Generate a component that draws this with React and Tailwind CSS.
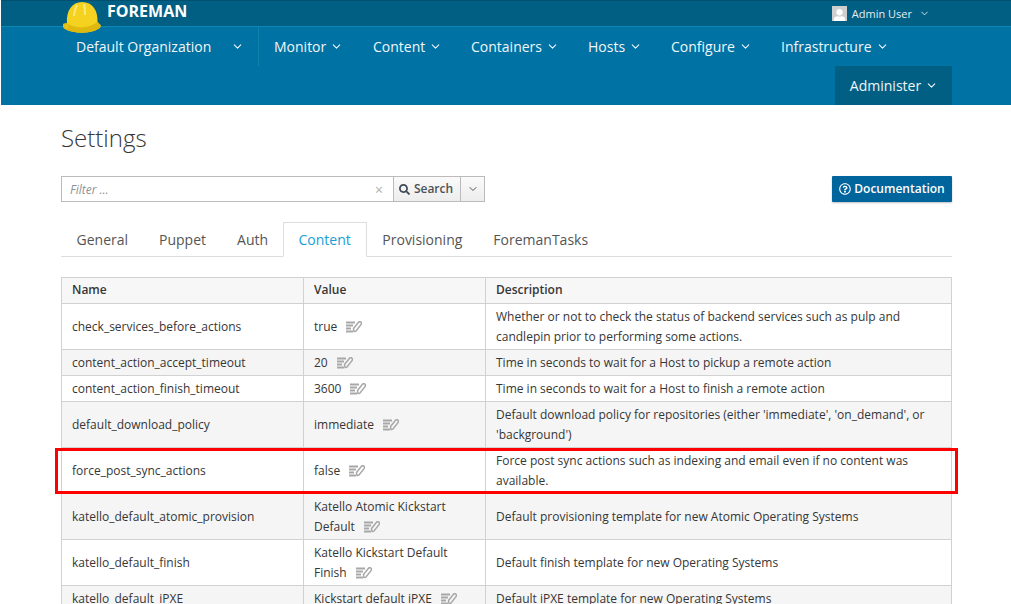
import { FaSearch, FaRegQuestionCircle, FaUser } from "react-icons/fa";
import { ChevronDown } from "lucide-react";

const navItems = [
  { label: "Monitor", w: "w-[99px]" },
  { label: "Content", w: "w-[98px]" },
  { label: "Containers", w: "w-[117px]" },
  { label: "Hosts", w: "w-[83px]" },
  { label: "Configure", w: "w-[110px]" },
  { label: "Infrastructure", w: "w-[139px]" },
];

const tabs = ["General", "Puppet", "Auth", "Content", "Provisioning", "ForemanTasks"];

const rows = [
  {
    name: "check_services_before_actions",
    value: "true",
    desc: "Whether or not to check the status of backend services such as pulp and candlepin prior to performing some actions.",
  },
  {
    name: "content_action_accept_timeout",
    value: "20",
    desc: "Time in seconds to wait for a Host to pickup a remote action",
  },
  {
    name: "content_action_finish_timeout",
    value: "3600",
    desc: "Time in seconds to wait for a Host to finish a remote action",
  },
  {
    name: "default_download_policy",
    value: "immediate",
    desc: "Default download policy for repositories (either 'immediate', 'on_demand', or 'background')",
  },
  {
    name: "force_post_sync_actions",
    value: "false",
    desc: "Force post sync actions such as indexing and email even if no content was available.",
  },
  {
    name: "katello_default_atomic_provision",
    value: "Katello Atomic Kickstart Default",
    desc: "Default provisioning template for new Atomic Operating Systems",
  },
  {
    name: "katello_default_finish",
    value: "Katello Kickstart Default Finish",
    desc: "Default finish template for new Operating Systems",
  },
  {
    name: "katello_default_iPXE",
    value: "Kickstart default iPXE",
    desc: "Default iPXE template for new Operating Systems",
  },
];

const Helmet = () => (
  <svg width="40" height="33" viewBox="0 0 40 33" className="absolute left-[62px] top-[1px]">
    <path d="M5 22C4 10 10 1 20 1C31 1 36 10 35.5 21L38.5 24C39 26 38 27 36 28C28 33 12 33 3 28C1 27 1 25 1 23Z" fill="#f4d21f" />
    <path d="M1 23L5 22C12 28 27 28 35.5 21L38.5 24C39 26 38 27 36 28C28 33 12 33 3 28C1 27 1 25 1 23Z" fill="#dfb90f" />
    <path d="M15 4C13 8 12 11 12 15" stroke="#fbe87a" strokeWidth="2" fill="none" />
    <path d="M22 3C23 7 23 10 23 14" stroke="#fbe87a" strokeWidth="2" fill="none" />
    <path d="M2 24L6 23L6 28L3 27Z" fill="#e8c418" />
  </svg>
);

const Caret = ({ className = "ml-[4px]" }) => <ChevronDown size={13} strokeWidth={2} className={className} />;

const EditIcon = () => (
  <svg width="16" height="12" viewBox="0 0 16 12" className="ml-[9px] inline-block align-[-2px]">
    <path d="M0 1.5H9M0 4.5H7M0 7.5H5M0 10.5H7" stroke="#a8a8a8" strokeWidth="1.8" />
    <path d="M8 10.5L7.5 7.5L12.5 1.2C13.2 .5 14.3 .6 15 1.2C15.6 1.9 15.6 2.8 15 3.6L10 10C9.5 10.5 8.8 10.7 8 10.5Z" fill="none" stroke="#a8a8a8" strokeWidth="1.5" />
  </svg>
);

const App = () => {
  return (
    <div className="relative h-[604px] w-[1011px] overflow-hidden bg-white font-['Open_Sans',sans-serif] text-[12px] leading-[20px] text-[#363636]">
      <header className="border-l border-white">
        <div className="flex h-[27px] items-center justify-end border-b border-t border-b-[#0a88b5] border-t-[#00506f] bg-[#005f83] pr-[81px] text-white">
          <div className="flex items-center text-[11px] text-[#e4eef3]">
            <div className="mr-[5px] flex h-[15px] w-[15px] items-end justify-center overflow-hidden bg-[#cfcfcf] text-white">
              <FaUser size={13} className="translate-y-[1px]" />
            </div>
            <span>Admin User</span>
            <ChevronDown size={11} strokeWidth={2} className="ml-[7px]" />
          </div>
        </div>
        <div className="absolute left-[107px] top-0 text-[16px] font-bold leading-[22px] text-white">FOREMAN</div>
        <Helmet />
        <nav className="h-[78px] bg-[#0072a3] text-[14px] text-[#f0f6f9]">
          <div className="flex h-[39px]">
            <div className="ml-[60px] flex h-[39px] w-[198px] items-center justify-between border-r border-[#0f82ad] pl-[15px] pr-[14px]">
              <span>Default Organization</span>
              <Caret className="" />
            </div>
            {navItems.map((item) => (
              <div key={item.label} className={`flex items-center pl-[15px] ${item.w}`}>
                <span>{item.label}</span>
                <Caret />
              </div>
            ))}
          </div>
          <div className="flex justify-end pr-[59px]">
            <div className="flex h-[39px] w-[117px] items-center justify-center pl-[1px] bg-[#005f83]">
              <span>Administer</span>
              <Caret />
            </div>
          </div>
        </nav>
      </header>

      <main className="pl-[61px] pr-[59px]">
        <h1 className="mt-[16px] h-[34px] text-[24px] font-light leading-[34px] text-[#363636]">Settings</h1>

        <div className="mt-[21px] flex items-start justify-between">
          <div className="flex h-[26px] w-[424px] border border-[#bbbbbb]">
            <div className="flex flex-1 items-center justify-between pl-[8px] pr-[10px] pt-[1px]">
              <span className="italic text-[#8f9194]">Filter ...</span>
              <span className="text-[14px] leading-none text-[#b0b0b0]">×</span>
            </div>
            <div className="flex w-[67px] items-center justify-center border-l border-[#bbbbbb] bg-gradient-to-b from-[#fafafa] to-[#ededed] pr-[2px] font-semibold text-[#4d5258]">
              <FaSearch size={11} className="mr-[4px] text-[#3f4a55]" />
              Search
            </div>
            <div className="flex w-[24px] items-center justify-center border-l border-[#bbbbbb] bg-gradient-to-b from-[#fafafa] to-[#ededed] text-[#4d5258]">
              <ChevronDown size={12} strokeWidth={2} />
            </div>
          </div>
          <div className="flex h-[26px] w-[120px] items-center justify-center rounded-[1px] bg-[#00659c] font-semibold text-white shadow-[0_1px_2px_rgba(0,0,0,0.25)]">
            <FaRegQuestionCircle size={12} className="mr-[3px]" />
            Documentation
          </div>
        </div>

        <ul className="mt-[20px] flex h-[35px] border-b border-[#dddddd] text-[14px]">
          {tabs.map((tab) =>
            tab === "Content" ? (
              <li key={tab} className="-ml-px flex h-[35px] items-center border border-b-white border-[#dddddd] bg-white px-[15px] text-[#1a9ed8]">
                {tab}
              </li>
            ) : (
              <li key={tab} className="flex h-[34px] items-center px-[15.5px] pt-[2px] text-[#555555]">
                {tab}
              </li>
            )
          )}
        </ul>

        <table className="mt-[20px] w-[891px] table-fixed border-collapse">
          <colgroup>
            <col className="w-[242px]" />
            <col className="w-[182px]" />
            <col />
          </colgroup>
          <thead>
            <tr className="h-[26px] bg-[#f7f7f7] text-left font-semibold">
              <th className="border border-[#d1d1d1] px-[10px] pb-[2px] pt-0 font-semibold">Name</th>
              <th className="border border-[#d1d1d1] px-[10px] pb-[2px] pt-0 font-semibold">Value</th>
              <th className="border border-[#d1d1d1] px-[10px] pb-[2px] pt-0 font-semibold">Description</th>
            </tr>
          </thead>
          <tbody>
            {rows.map((row, i) => (
              <tr key={row.name} className={i % 2 === 1 || i === 5 ? "bg-[#f5f5f5]" : "bg-white"}>
                <td className="border border-[#d1d1d1] px-[10px] py-[2.5px]">{row.name}</td>
                <td className="border border-[#d1d1d1] px-[10px] py-[2.5px]">
                  {row.value}
                  <EditIcon />
                </td>
                <td className="border border-[#d1d1d1] px-[10px] py-[2.5px]">{row.desc}</td>
              </tr>
            ))}
          </tbody>
        </table>
      </main>

      <div className="pointer-events-none absolute left-[55px] top-[448px] h-[46px] w-[903px] border-[3px] border-[#ff0000]" />
    </div>
  );
};

export default App;
